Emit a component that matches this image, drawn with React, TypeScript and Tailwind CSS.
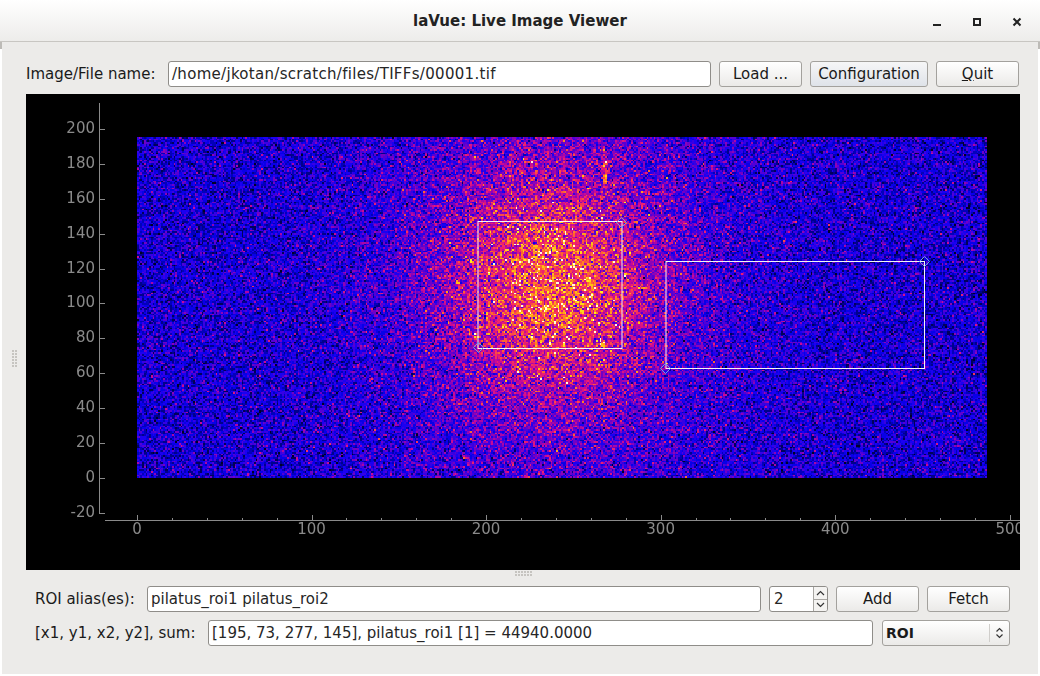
import { useEffect, useRef } from "react";

const font = "font-['DejaVu_Sans',sans-serif]";

function Btn({ children, className = "", grad = "bg-gradient-to-b from-white to-[#ebeae8]" }: { children: React.ReactNode; className?: string; grad?: string }) {
  return (
    <button className={`h-[26px] rounded-[3px] border border-[#a3a19d] text-[15px] leading-none text-[#1a1a1a] ${grad} ${className}`}>
      {children}
    </button>
  );
}

function Field({ value, className = "" }: { value: string; className?: string }) {
  return (
    <div className={`flex h-[26px] items-center rounded-[3px] border border-[#8f8d89] bg-white pl-[3px] text-[15px] text-[#262626] ${className}`}>
      {value}
    </div>
  );
}

function Grip({ vertical }: { vertical?: boolean }) {
  return (
    <div className={vertical ? "grid grid-cols-2 gap-[1px]" : "grid grid-cols-6 gap-[1px]"}>
      {Array.from({ length: 12 }).map((_, i) => (
        <div key={i} className="h-[2px] w-[2px] bg-[#c6c4c0]" />
      ))}
    </div>
  );
}

function colormap(t: number): [number, number, number] {
  const stops: [number, number, number, number][] = [
    [0, 0, 0, 40],
    [0.1, 0, 0, 150],
    [0.2, 10, 0, 250],
    [0.36, 110, 0, 200],
    [0.5, 200, 10, 150],
    [0.62, 245, 40, 100],
    [0.74, 255, 110, 40],
    [0.86, 255, 190, 20],
    [0.97, 255, 245, 30],
    [1, 255, 255, 220],
  ];
  const v = Math.max(0, Math.min(1, t));
  for (let i = 1; i < stops.length; i++) {
    if (v <= stops[i][0]) {
      const a = stops[i - 1];
      const b = stops[i];
      const f = (v - a[0]) / (b[0] - a[0]);
      return [a[1] + (b[1] - a[1]) * f, a[2] + (b[2] - a[2]) * f, a[3] + (b[3] - a[3]) * f];
    }
  }
  return [255, 255, 255];
}

function Heat() {
  const ref = useRef<HTMLCanvasElement>(null);
  useEffect(() => {
    const c = ref.current;
    if (!c) return;
    const ctx = c.getContext("2d");
    if (!ctx) return;
    let s = 12345;
    const rnd = () => {
      s |= 0;
      s = (s + 0x6d2b79f5) | 0;
      let t = Math.imul(s ^ (s >>> 15), 1 | s);
      t = (t + Math.imul(t ^ (t >>> 7), 61 | t)) ^ t;
      return ((t ^ (t >>> 14)) >>> 0) / 4294967296;
    };
    const poisson = (l: number) => {
      const L = Math.exp(-l);
      let k = 0;
      let p = 1;
      do {
        k++;
        p *= rnd();
      } while (p > L);
      return k - 1;
    };
    const W = 487;
    const H = 195;
    const sx = 850 / W;
    const sy = 341 / H;
    for (let y = 0; y < H; y++) {
      const dy = H - 1 - y;
      for (let x = 0; x < W; x++) {
        const g1 = Math.exp(-((x - 238) ** 2) / (2 * 36 ** 2) - ((dy - 108) ** 2) / (2 * 38 ** 2));
        const g2 = Math.exp(-((x - 238) ** 2) / (2 * 62 ** 2) - ((dy - 115) ** 2) / (2 * 85 ** 2));
        const streak = x >= 267 && x <= 268 && dy > 165 && dy < 185 ? 4 : 0;
        const lambda = 4.3 + 5 * g2 + 6.5 * g1 + streak;
        const n = poisson(lambda);
        const [r, g, b] = colormap(n / 22);
        ctx.fillStyle = `rgb(${r | 0},${g | 0},${b | 0})`;
        const x0 = Math.round(x * sx);
        const y0 = Math.round(y * sy);
        ctx.fillRect(x0, y0, Math.round((x + 1) * sx) - x0, Math.round((y + 1) * sy) - y0);
      }
    }
  }, []);
  return <canvas ref={ref} width={850} height={341} className="absolute left-[111px] top-[43px]" />;
}

function Axes() {
  const gray = "#8a8a8a";
  const yT = [200, 180, 160, 140, 120, 100, 80, 60, 40, 20, 0, -20];
  const xMajor = [0, 100, 200, 300, 400, 500];
  const px = (v: number) => 111 + v * 1.7455;
  const py = (v: number) => 384 - v * 1.7455;
  const minor: number[] = [];
  for (let v = 20; v < 500; v += 20) if (v % 100 !== 0) minor.push(v);
  return (
    <svg width={994} height={476} className="absolute left-0 top-0" fontFamily="DejaVu Sans" fontSize="15" fill={gray}>
      <line x1="73.5" y1="9" x2="73.5" y2="420" stroke={gray} />
      {yT.map((v) => (
        <g key={v}>
          <line x1="73" x2="79" y1={Math.round(py(v)) + 0.5} y2={Math.round(py(v)) + 0.5} stroke={gray} />
          <text x="69" y={py(v) + 4} textAnchor="end">{v}</text>
        </g>
      ))}
      <line x1="79" y1="426.5" x2="994" y2="426.5" stroke={gray} />
      {xMajor.map((v) => (
        <g key={v}>
          <line y1="421" y2="427" x1={Math.round(px(v)) + 0.5} x2={Math.round(px(v)) + 0.5} stroke={gray} />
          <text x={px(v)} y="440" textAnchor="middle">{v}</text>
        </g>
      ))}
      {minor.map((v) => (
        <line key={v} y1="424" y2="427" x1={Math.round(px(v)) + 0.5} x2={Math.round(px(v)) + 0.5} stroke={gray} />
      ))}
      <g fill="none" stroke="#f4f4f4">
        <rect x="452" y="127.5" width="144" height="127" />
        <rect x="640" y="167.5" width="258.5" height="107" />
      </g>
      <g fill="none" stroke="#6fa3dc">
        <path d="M595.5 123.5 l5 5 l-5 5 l-5 -5 z" />
        <path d="M452.5 248.5 l5 5 l-5 5 l-5 -5 z" />
        <path d="M898.5 162.5 l5 5 l-5 5 l-5 -5 z" />
        <path d="M639.5 269.5 l5 5 l-5 5 l-5 -5 z" />
      </g>
    </svg>
  );
}

export default function App() {
  return (
    <div className={`relative flex h-[676px] w-[1040px] flex-col overflow-hidden bg-white ${font}`}>
      <div className="flex h-[42px] shrink-0 items-center border-b border-[#c8c6c2] bg-gradient-to-b from-white to-[#edecea]">
        <div className="ml-[413px] mt-[1px] w-[240px] text-[15px] font-bold text-[#222222]">laVue: Live Image Viewer</div>
        <div className="ml-[277px] mt-[2px] flex items-center gap-[26px]">
          <svg width="14" height="14" viewBox="0 0 14 14"><rect x="3" y="9" width="8" height="2" fill="#222" /></svg>
          <svg width="14" height="14" viewBox="0 0 14 14"><rect x="4" y="4" width="6" height="6" fill="none" stroke="#222" strokeWidth="2" /></svg>
          <svg width="14" height="14" viewBox="0 0 14 14"><path d="M3.5 3.5 L10.5 10.5 M10.5 3.5 L3.5 10.5" stroke="#222" strokeWidth="2" /></svg>
        </div>
      </div>
      <div className="absolute left-0 top-[42px] h-[7px] w-[2px] bg-[#bdbbb7]" />
      <div className="absolute right-0 top-[42px] h-[7px] w-[2px] bg-[#bdbbb7]" />
      <div className="mx-[2px] flex h-[632px] shrink-0 flex-col bg-[#ecebe9] text-[15px] text-[#1a1a1a]">
        <div className="mt-[19px] flex h-[26px] shrink-0 items-center pl-[24px] pr-[19px]">
          <span className="w-[142px]">Image/File name:</span>
          <Field value="/home/jkotan/scratch/files/TIFFs/00001.tif" className="w-[543px] tracking-[0.3px]" />
          <Btn className="ml-[8px] w-[83px]">Load ...</Btn>
          <Btn className="ml-[8px] w-[118px]" grad="bg-gradient-to-b from-[#f6f6f7] to-[#dfe3e9]">Configuration</Btn>
          <Btn className="ml-[8px] w-[83px]"><span className="underline">Q</span>uit</Btn>
        </div>
        <div className="mt-[7px] flex h-[476px] shrink-0">
          <div className="ml-[10px] mr-[9px] mt-[256px] shrink-0">
            <Grip vertical />
          </div>
          <div className="relative h-[476px] w-[994px] shrink-0 overflow-hidden bg-black">
            <Heat />
            <Axes />
          </div>
        </div>
        <div className="flex h-[16px] shrink-0 items-start pl-[513px] pt-[1px]">
          <Grip />
        </div>
        <div className="flex h-[26px] shrink-0 items-center pl-[33px]">
          <span className="w-[112px]">ROI alias(es):</span>
          <Field value="pilatus_roi1 pilatus_roi2" className="w-[614px]" />
          <div className="ml-[8px] flex h-[26px] w-[59px] overflow-hidden rounded-[3px] border border-[#8f8d89] bg-white">
            <div className="flex flex-1 items-center pl-[4px] text-[#262626]">2</div>
            <div className="flex w-[14px] flex-col border-l border-[#a8a6a2] bg-[#f4f3f1]">
              <div className="flex flex-1 items-center justify-center border-b border-[#a8a6a2]">
                <svg width="9" height="6" viewBox="0 0 9 6"><path d="M1 5 L4.5 1.5 L8 5" fill="none" stroke="#333" strokeWidth="1.2" /></svg>
              </div>
              <div className="flex flex-1 items-center justify-center">
                <svg width="9" height="6" viewBox="0 0 9 6"><path d="M1 1 L4.5 4.5 L8 1" fill="none" stroke="#333" strokeWidth="1.2" /></svg>
              </div>
            </div>
          </div>
          <Btn className="ml-[8px] w-[83px]">Add</Btn>
          <Btn className="ml-[8px] w-[83px]">Fetch</Btn>
        </div>
        <div className="mt-[8px] flex h-[26px] shrink-0 items-center pl-[33px]">
          <span className="w-[173px]">[x1, y1, x2, y2], sum:</span>
          <Field value="[195, 73, 277, 145], pilatus_roi1 [1] = 44940.0000" className="w-[665px]" />
          <button className="ml-[9px] flex h-[26px] w-[128px] items-center rounded-[3px] border border-[#a3a19d] bg-gradient-to-b from-white to-[#ebeae8] pl-[3px] text-[14px] font-bold text-[#1a1a1a]">
            <span className="flex-1 text-left">ROI</span>
            <span className="mr-[5px] flex h-[18px] w-[15px] items-center justify-center border-l border-[#d0cecb] pl-[4px]">
              <svg width="9" height="12" viewBox="0 0 9 12"><path d="M1.5 4.5 L4.5 1.5 L7.5 4.5 M1.5 7.5 L4.5 10.5 L7.5 7.5" fill="none" stroke="#333" strokeWidth="1.2" /></svg>
            </span>
          </button>
        </div>
      </div>
    </div>
  );
}
